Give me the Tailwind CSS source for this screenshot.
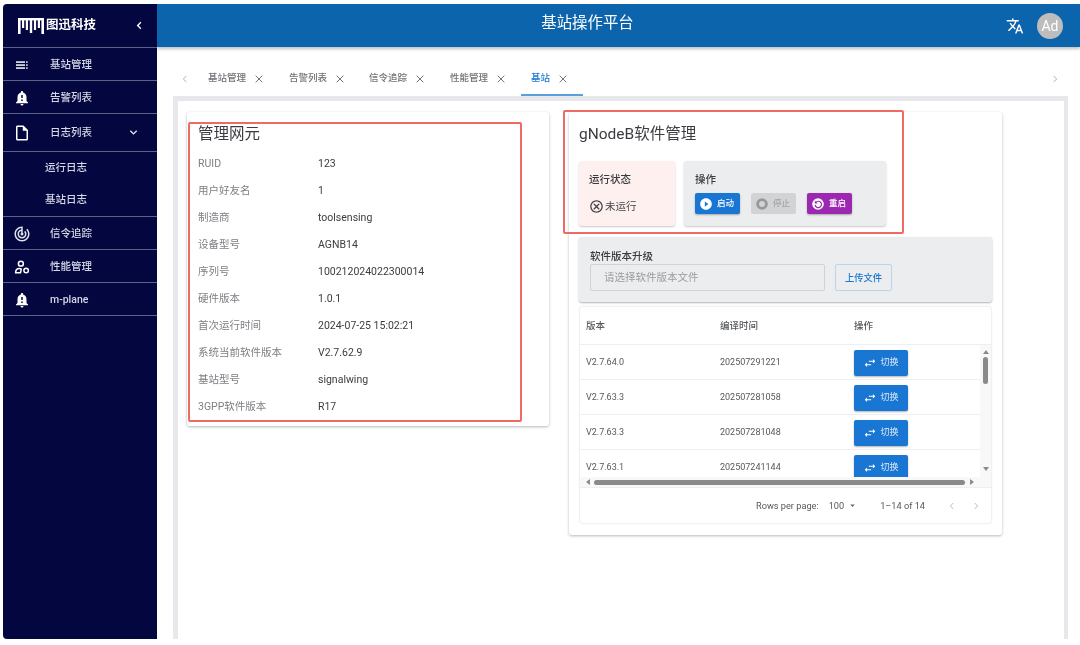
<!DOCTYPE html>
<html lang="zh">
<head>
<meta charset="utf-8">
<script src="https://cdn.jsdelivr.net/npm/@tailwindcss/browser@4"></script>
</head>
<body class="bg-white">
<div class="relative w-[1080px] h-[645px] overflow-hidden bg-white pt-1 pl-[3px] pb-[6px] flex blur-[0.45px] font-['Roboto','Noto_Sans_CJK_SC',sans-serif]">
  <!-- sidebar -->
  <aside class="w-[154px] h-full shrink-0 bg-[#03063f] rounded-l-[4px] text-[#d5d7e4] text-[10.5px] font-medium">
    <div class="h-[44px] flex items-center pl-[15px] pr-[12px] border-b border-[#5d6288] text-white">
      <svg class="w-[26px] h-[16px] shrink-0" viewBox="0 0 26 16" fill="#fff"><rect x="0" y="0" width="26" height="2.4"/><rect x="0" y="0" width="2.6" height="16"/><rect x="4" y="0" width="2.2" height="10"/><rect x="7.8" y="0" width="2.2" height="12"/><rect x="11.8" y="0" width="2.4" height="15"/><rect x="15.9" y="0" width="2.2" height="12"/><rect x="19.8" y="0" width="2.2" height="10"/><rect x="23.4" y="0" width="2.6" height="16"/></svg>
      <span class="ml-[2px] text-[12.5px] font-bold">图迅科技</span>
      <svg class="w-[11px] h-[11px] ml-auto" viewBox="0 0 24 24" fill="none" stroke="#fff" stroke-width="3"><path d="M15 5l-7 7 7 7"/></svg>
    </div>
    <div class="h-[33px] flex items-center pl-[10px] pt-[1px] border-b border-[#5d6288]">
      <svg class="w-[18px] h-[18px] shrink-0" viewBox="0 0 24 24" fill="#e6e7ef"><rect x="4" y="7" width="12" height="2.2"/><rect x="4" y="11" width="12" height="2.2"/><rect x="4" y="15" width="12" height="2.2"/><rect x="17.5" y="7" width="2" height="2.2"/><rect x="17.5" y="11" width="2" height="2.2"/><rect x="17.5" y="15" width="2" height="2.2"/></svg>
      <span class="ml-[19px]">基站管理</span>
    </div>
    <div class="h-[33px] flex items-center pl-[10px] pt-[1px] border-b border-[#5d6288]">
      <svg class="w-[18px] h-[18px] shrink-0" viewBox="0 0 24 24" fill="#fff"><path d="M18 16v-5c0-3.07-1.64-5.64-4.5-6.32V4c0-.83-.67-1.5-1.5-1.5s-1.5.67-1.5 1.5v.68C7.63 5.36 6 7.92 6 11v5l-2 2v1h16v-1l-2-2zm-5 0h-2v-2h2v2zm0-4h-2V8h2v4zm-1 10c1.1 0 2-.9 2-2h-4c0 1.1.9 2 2 2z"/></svg>
      <span class="ml-[19px]">告警列表</span>
    </div>
    <div class="h-[38px] flex items-center pl-[10px] pr-[18px] border-b border-[#5d6288]">
      <svg class="w-[18px] h-[18px] shrink-0" viewBox="0 0 24 24" fill="#fff"><path d="M14 2H6c-1.1 0-1.99.9-1.99 2L4 20c0 1.1.89 2 1.99 2H18c1.1 0 2-.9 2-2V8l-6-6zM6 20V4h7v5h5v11H6z"/></svg>
      <span class="ml-[19px]">日志列表</span>
      <svg class="w-[11px] h-[11px] ml-auto" viewBox="0 0 24 24" fill="none" stroke="#e6e7ef" stroke-width="3"><path d="M5 8l7 7 7-7"/></svg>
    </div>
    <div class="h-[65px] border-b border-[#5d6288] flex flex-col pl-[42px]">
      <div class="h-[32px] flex items-center">运行日志</div>
      <div class="h-[33px] flex items-center">基站日志</div>
    </div>
    <div class="h-[33px] flex items-center pl-[10px] pt-[1px] border-b border-[#5d6288]">
      <svg class="w-[18px] h-[18px] shrink-0" viewBox="0 0 24 24" fill="#dfe0ea"><path d="M19.07 4.93l-1.41 1.41C19.1 7.79 20 9.79 20 12c0 4.42-3.58 8-8 8s-8-3.58-8-8c0-4.08 3.05-7.44 7-7.93v2.02C8.16 6.57 6 9.03 6 12c0 3.31 2.69 6 6 6s6-2.69 6-6c0-1.66-.67-3.16-1.76-4.24l-1.41 1.41C15.55 9.9 16 10.9 16 12c0 2.21-1.79 4-4 4s-4-1.79-4-4c0-1.86 1.28-3.41 3-3.86v2.14c-.6.35-1 .98-1 1.72 0 1.1.9 2 2 2s2-.9 2-2c0-.74-.4-1.38-1-1.72V2h-1C6.48 2 2 6.48 2 12s4.48 10 10 10 10-4.48 10-10c0-2.76-1.12-5.26-2.93-7.07z"/></svg>
      <span class="ml-[19px]">信令追踪</span>
    </div>
    <div class="h-[33px] flex items-center pl-[10px] pt-[1px] border-b border-[#5d6288]">
      <svg class="w-[18px] h-[18px] shrink-0" viewBox="0 0 24 24" fill="none" stroke="#fff" stroke-width="2"><circle cx="10.5" cy="7.5" r="3.3"/><path d="M3.5 19.5c0-3.5 2-5.5 5-5.5 1.6 0 2.5.8 2.5.8l-1 4.7z"/><circle cx="17.5" cy="16.5" r="3"/></svg>
      <span class="ml-[19px]">性能管理</span>
    </div>
    <div class="h-[33px] flex items-center pl-[10px] pt-[1px] border-b border-[#5d6288]">
      <svg class="w-[18px] h-[18px] shrink-0" viewBox="0 0 24 24" fill="#fff"><path d="M18 16v-5c0-3.07-1.64-5.64-4.5-6.32V4c0-.83-.67-1.5-1.5-1.5s-1.5.67-1.5 1.5v.68C7.63 5.36 6 7.92 6 11v5l-2 2v1h16v-1l-2-2zm-5 0h-2v-2h2v2zm0-4h-2V8h2v4zm-1 10c1.1 0 2-.9 2-2h-4c0 1.1.9 2 2 2z"/></svg>
      <span class="ml-[19px]">m-plane</span>
    </div>
  </aside>

  <!-- main -->
  <div class="flex-1 min-w-0 flex flex-col">
    <header class="relative h-[43px] shrink-0 bg-[#0c64ad] shadow-[0_2px_3px_rgba(0,0,0,0.25)] flex items-center justify-center text-white pr-[62px]">
      <span class="text-[15.4px] -mt-[4px]">基站操作平台</span>
      <div class="absolute right-[17px] top-[9px] flex items-center gap-[13px]">
        <svg class="w-[18px] h-[18px]" viewBox="0 0 24 24" fill="#fff"><path d="M12.87 15.07l-2.54-2.51.03-.03c1.74-1.94 2.98-4.17 3.71-6.53H17V4h-7V2H8v2H1v1.99h11.17C11.5 7.92 10.44 9.75 9 11.35 8.07 10.32 7.3 9.19 6.69 8h-2c.73 1.63 1.73 3.17 2.98 4.56l-5.09 5.02L4 19l5-5 3.11 3.11.76-2.04zM18.5 10h-2L12 22h2l1.12-3h4.75L21 22h2l-4.5-12zm-2.62 7l1.62-4.33L19.12 17h-3.24z"/></svg>
        <div class="w-[26px] h-[26px] rounded-full bg-[#bdbdbd] flex items-center justify-center text-[14px]">Ad</div>
      </div>
    </header>

    <!-- tabs -->
    <div class="h-[49px] shrink-0 relative flex items-end text-[9.5px] text-[#6f7276] font-medium">
      <div class="w-[20px] ml-[19px] h-[35px] flex items-center shrink-0 pl-[4px]">
        <svg class="w-[10px] h-[10px]" viewBox="0 0 24 24" fill="none" stroke="#9a9da1" stroke-width="2"><path d="M15 5l-7 7 7 7"/></svg>
      </div>
      <div class="h-[35px] flex items-center w-[81px] pl-[12px] shrink-0 gap-[8px]"><span>基站管理</span><svg class="w-[10px] h-[10px]" viewBox="0 0 24 24" fill="none" stroke="#6f7276" stroke-width="2.4"><path d="M4 4l16 16M20 4L4 20"/></svg></div>
      <div class="h-[35px] flex items-center w-[80px] pl-[12px] shrink-0 gap-[8px]"><span>告警列表</span><svg class="w-[10px] h-[10px]" viewBox="0 0 24 24" fill="none" stroke="#6f7276" stroke-width="2.4"><path d="M4 4l16 16M20 4L4 20"/></svg></div>
      <div class="h-[35px] flex items-center w-[81px] pl-[12px] shrink-0 gap-[8px]"><span>信令追踪</span><svg class="w-[10px] h-[10px]" viewBox="0 0 24 24" fill="none" stroke="#6f7276" stroke-width="2.4"><path d="M4 4l16 16M20 4L4 20"/></svg></div>
      <div class="h-[35px] flex items-center w-[83px] pl-[12px] shrink-0 gap-[8px]"><span>性能管理</span><svg class="w-[10px] h-[10px]" viewBox="0 0 24 24" fill="none" stroke="#6f7276" stroke-width="2.4"><path d="M4 4l16 16M20 4L4 20"/></svg></div>
      <div class="h-[35px] flex items-center w-[62px] pl-[10px] pt-[2px] shrink-0 gap-[8px] text-[#1976d2] border-b-2 border-[#5b9fde]"><span>基站</span><svg class="w-[10px] h-[10px]" viewBox="0 0 24 24" fill="none" stroke="#6f7276" stroke-width="2.4"><path d="M4 4l16 16M20 4L4 20"/></svg></div>
      <div class="ml-auto mr-[20px] h-[35px] flex items-center">
        <svg class="w-[10px] h-[10px]" viewBox="0 0 24 24" fill="none" stroke="#9a9da1" stroke-width="2"><path d="M9 5l7 7-7 7"/></svg>
      </div>
    </div>

    <!-- panel -->
    <div class="flex-1 min-h-0 ml-4 mr-3 bg-white border-l-[5px] border-r-[4px] border-t-[5px] border-[#e7e8ec] flex items-start pl-[9px] pt-[11px] gap-5 text-[10.5px] text-[#44474b]">
      <!-- left card -->
      <section class="w-[362px] h-[314px] shrink-0 bg-white rounded-[3px] shadow-[0_1px_3px_rgba(0,0,0,0.28)] pl-[11px] pt-[10px]">
        <h2 class="h-[24px] leading-[24px] text-[15.5px] text-[#3a3c40]">管理网元</h2>
        <dl class="mt-1">
          <div class="h-[27px] flex items-center"><dt class="w-[120px] text-[#7c7f83]">RUID</dt><dd class="text-[#3a3c40]">123</dd></div>
          <div class="h-[27px] flex items-center"><dt class="w-[120px] text-[#7c7f83]">用户好友名</dt><dd class="text-[#3a3c40]">1</dd></div>
          <div class="h-[27px] flex items-center"><dt class="w-[120px] text-[#7c7f83]">制造商</dt><dd class="text-[#3a3c40]">toolsensing</dd></div>
          <div class="h-[27px] flex items-center"><dt class="w-[120px] text-[#7c7f83]">设备型号</dt><dd class="text-[#3a3c40]">AGNB14</dd></div>
          <div class="h-[27px] flex items-center"><dt class="w-[120px] text-[#7c7f83]">序列号</dt><dd class="text-[#3a3c40]">100212024022300014</dd></div>
          <div class="h-[27px] flex items-center"><dt class="w-[120px] text-[#7c7f83]">硬件版本</dt><dd class="text-[#3a3c40]">1.0.1</dd></div>
          <div class="h-[27px] flex items-center"><dt class="w-[120px] text-[#7c7f83]">首次运行时间</dt><dd class="text-[#3a3c40]">2024-07-25 15:02:21</dd></div>
          <div class="h-[27px] flex items-center"><dt class="w-[120px] text-[#7c7f83]">系统当前软件版本</dt><dd class="text-[#3a3c40]">V2.7.62.9</dd></div>
          <div class="h-[27px] flex items-center"><dt class="w-[120px] text-[#7c7f83]">基站型号</dt><dd class="text-[#3a3c40]">signalwing</dd></div>
          <div class="h-[27px] flex items-center"><dt class="w-[120px] text-[#7c7f83]">3GPP软件版本</dt><dd class="text-[#3a3c40]">R17</dd></div>
        </dl>
      </section>

      <!-- right card -->
      <section class="w-[433px] h-[423px] shrink-0 bg-white rounded-[3px] shadow-[0_1px_3px_rgba(0,0,0,0.28)] pl-[10px] pr-[10px] pt-[10px]">
        <h2 class="h-[24px] leading-[24px] text-[15.5px] text-[#3a3c40]">gNodeB软件管理</h2>
        <div class="mt-[15px] flex gap-[9px] h-[65px]">
          <div class="w-[96px] bg-[#fdf0ef] rounded-[3px] shadow-[0_1px_2px_rgba(0,0,0,0.22)] pl-[10px] pt-[11px]">
            <div class="font-medium text-[#3a3c40] leading-[15px]">运行状态</div>
            <div class="mt-[12px] flex items-center gap-[1px] text-[#44474b]">
              <svg class="w-[15px] h-[15px]" viewBox="0 0 24 24" fill="#3f4145"><path d="M12 2C6.47 2 2 6.47 2 12s4.47 10 10 10 10-4.47 10-10S17.53 2 12 2zm0 18c-4.41 0-8-3.59-8-8s3.59-8 8-8 8 3.59 8 8-3.59 8-8 8zm3.59-13L12 10.59 8.41 7 7 8.41 10.59 12 7 15.59 8.41 17 12 13.41 15.59 17 17 15.59 13.41 12 17 8.41z"/></svg>
              <span>未运行</span>
            </div>
          </div>
          <div class="w-[202px] bg-[#ebedef] rounded-[3px] shadow-[0_1px_2px_rgba(0,0,0,0.22)] pl-[11px] pt-[11px]">
            <div class="font-medium text-[#3a3c40] leading-[15px]">操作</div>
            <div class="mt-[6px] flex gap-[11px] text-[8.5px] font-medium">
              <button class="w-[45px] h-[21px] rounded-[2px] bg-[#1976d2] text-white flex items-center pl-[4px] gap-[4px] shadow-[0_1px_2px_rgba(0,0,0,0.3)]"><svg class="w-[14px] h-[14px] shrink-0" viewBox="0 0 24 24" fill="#fff"><path d="M12 2C6.48 2 2 6.48 2 12s4.48 10 10 10 10-4.48 10-10S17.52 2 12 2zm-2 14.5v-9l6 4.5-6 4.5z"/></svg><span>启动</span></button>
              <button class="w-[45px] h-[21px] rounded-[2px] bg-[#d2d3d5] text-[#a3a5a8] flex items-center pl-[4px] gap-[4px]"><svg class="w-[14px] h-[14px] shrink-0" viewBox="0 0 24 24" fill="none"><circle cx="12" cy="12" r="7.5" stroke="#98999c" stroke-width="5"/></svg><span>停止</span></button>
              <button class="w-[45px] h-[21px] rounded-[2px] bg-[#9c27b0] text-white flex items-center pl-[4px] gap-[4px] shadow-[0_1px_2px_rgba(0,0,0,0.3)]"><svg class="w-[14px] h-[14px] shrink-0" viewBox="0 0 24 24"><circle cx="12" cy="12" r="10" fill="#fff"/><path d="M8 9.5a5.5 5.5 0 1 1-1 4" fill="none" stroke="#9c27b0" stroke-width="2"/><path d="M6.5 6v5h5z" fill="#9c27b0"/></svg><span>重启</span></button>
            </div>
          </div>
        </div>

        <div class="mt-[11px] h-[65px] bg-[#ebedef] rounded-[3px] shadow-[0_1px_2px_rgba(0,0,0,0.3)] pl-[11px] pt-[12px]">
          <div class="font-medium text-[#3a3c40] leading-[15px]">软件版本升级</div>
          <div class="flex gap-[10px]">
            <div class="w-[235px] h-[27px] border border-[#d0d2d5] rounded-[2px] pl-[13px] flex items-center text-[#9a9da1]">请选择软件版本文件</div>
            <button class="w-[57px] h-[27px] border border-[#bcd5ee] rounded-[2px] text-[9.3px] font-medium text-[#1976d2] flex items-center justify-center">上传文件</button>
          </div>
        </div>

        <div class="mt-[5px] ml-[1px] w-[411px] h-[216px] bg-white rounded-[2px] shadow-[0_0_2px_rgba(0,0,0,0.22)] text-[9px] text-[#55585c] flex flex-col">
          <div class="h-[38px] shrink-0 flex items-center border-b border-[#eeeff1] pl-[6px] pt-[1px] font-medium text-[9.5px]">
            <span class="w-[134px]">版本</span><span class="w-[134px]">编译时间</span><span>操作</span>
          </div>
          <div class="h-[132px] shrink-0 flex overflow-hidden">
            <div class="flex-1 min-w-0 overflow-hidden">
              <div class="h-[35px] flex items-center border-b border-[#eeeff1] pl-[6px] pt-[1px]"><span class="w-[134px]">V2.7.64.0</span><span class="w-[134px]">202507291221</span><button class="w-[54px] h-[26px] rounded-[2px] bg-[#1976d2] text-[#dbe9f7] flex items-center justify-center gap-[3px] shadow-[0_1px_2px_rgba(0,0,0,0.3)]"><svg class="w-[14px] h-[14px]" viewBox="0 0 24 24" fill="#fff"><path d="M6.99 11L3 15l3.99 4v-3H14v-2H6.99v-3zM21 9l-3.99-4v3H10v2h7.01v3L21 9z"/></svg><span>切换</span></button></div>
              <div class="h-[35px] flex items-center border-b border-[#eeeff1] pl-[6px] pt-[1px]"><span class="w-[134px]">V2.7.63.3</span><span class="w-[134px]">202507281058</span><button class="w-[54px] h-[26px] rounded-[2px] bg-[#1976d2] text-[#dbe9f7] flex items-center justify-center gap-[3px] shadow-[0_1px_2px_rgba(0,0,0,0.3)]"><svg class="w-[14px] h-[14px]" viewBox="0 0 24 24" fill="#fff"><path d="M6.99 11L3 15l3.99 4v-3H14v-2H6.99v-3zM21 9l-3.99-4v3H10v2h7.01v3L21 9z"/></svg><span>切换</span></button></div>
              <div class="h-[35px] flex items-center border-b border-[#eeeff1] pl-[6px] pt-[1px]"><span class="w-[134px]">V2.7.63.3</span><span class="w-[134px]">202507281048</span><button class="w-[54px] h-[26px] rounded-[2px] bg-[#1976d2] text-[#dbe9f7] flex items-center justify-center gap-[3px] shadow-[0_1px_2px_rgba(0,0,0,0.3)]"><svg class="w-[14px] h-[14px]" viewBox="0 0 24 24" fill="#fff"><path d="M6.99 11L3 15l3.99 4v-3H14v-2H6.99v-3zM21 9l-3.99-4v3H10v2h7.01v3L21 9z"/></svg><span>切换</span></button></div>
              <div class="h-[35px] flex items-center border-b border-[#eeeff1] pl-[6px] pt-[1px]"><span class="w-[134px]">V2.7.63.1</span><span class="w-[134px]">202507241144</span><button class="w-[54px] h-[26px] rounded-[2px] bg-[#1976d2] text-[#dbe9f7] flex items-center justify-center gap-[3px] shadow-[0_1px_2px_rgba(0,0,0,0.3)]"><svg class="w-[14px] h-[14px]" viewBox="0 0 24 24" fill="#fff"><path d="M6.99 11L3 15l3.99 4v-3H14v-2H6.99v-3zM21 9l-3.99-4v3H10v2h7.01v3L21 9z"/></svg><span>切换</span></button></div>
            </div>
            <div class="w-[11px] shrink-0 bg-[#f8f8f9] flex flex-col items-center pt-[5px]">
              <div class="w-0 h-0 border-x-[3px] border-x-transparent border-b-[4px] border-b-[#8a8a8a]"></div>
              <div class="mt-[3px] w-[5px] h-[27px] rounded-full bg-[#8a8a8a]"></div>
              <div class="mt-auto mb-[6px] w-0 h-0 border-x-[3px] border-x-transparent border-t-[4px] border-t-[#8a8a8a]"></div>
            </div>
          </div>
          <div class="h-[11px] shrink-0 flex items-center px-[6px] bg-[#f8f8f9] border-b border-[#eeeff1]">
            <div class="w-0 h-0 border-y-[3px] border-y-transparent border-r-[4px] border-r-[#8a8a8a]"></div>
            <div class="ml-[4px] w-[371px] h-[5px] rounded-full bg-[#8a8a8a]"></div>
            <div class="ml-[5px] w-0 h-0 border-y-[3px] border-y-transparent border-l-[4px] border-l-[#8a8a8a]"></div>
          </div>
          <div class="flex-1 flex items-center justify-end text-[9.2px] pr-[10px]">
            <span>Rows per page:</span>
            <span class="ml-[10px]">100</span>
            <svg class="ml-[3px] w-[11px] h-[11px]" viewBox="0 0 24 24" fill="#66696d"><path d="M7 10l5 5 5-5z"/></svg>
            <span class="ml-[22px]">1–14 of 14</span>
            <svg class="ml-[22px] w-[10px] h-[10px]" viewBox="0 0 24 24" fill="none" stroke="#a9acaf" stroke-width="2"><path d="M15 5l-7 7 7 7"/></svg>
            <svg class="ml-[14px] w-[10px] h-[10px]" viewBox="0 0 24 24" fill="none" stroke="#a9acaf" stroke-width="2"><path d="M9 5l7 7-7 7"/></svg>
          </div>
        </div>
      </section>
    </div>
  </div>

  <!-- annotation boxes drawn over the screenshot -->
  <div class="absolute left-[188px] top-[122px] w-[334px] h-[300px] border-2 border-[#ef6a64] rounded-[2px] pointer-events-none"></div>
  <div class="absolute left-[563px] top-[110px] w-[341px] h-[124px] border-2 border-[#ef6a64] rounded-[2px] pointer-events-none"></div>
</div>
</body>
</html>
